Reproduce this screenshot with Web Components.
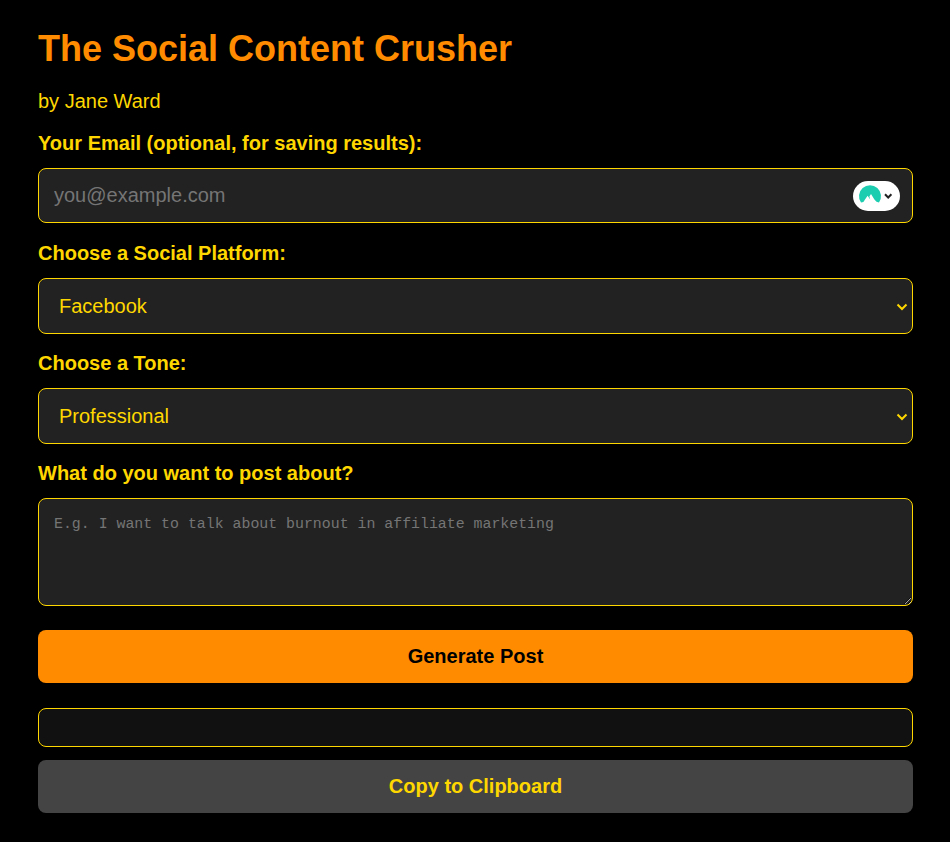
<!DOCTYPE html>
<html lang="en">
<head>
<meta charset="utf-8">
<title>The Social Content Crusher</title>
<style>
  html, body { margin: 0; background: #000; }
  body { font-family: "Liberation Sans", Arial, sans-serif; color: #ffd700; }
</style>
</head>
<body>
<crusher-app>
  <h-title slot="head">The Social Content Crusher</h-title>
  <by-line slot="head">by Jane Ward</by-line>
  <field-label>Your Email (optional, for saving results):</field-label>
  <email-field placeholder="you@example.com"></email-field>
  <field-label>Choose a Social Platform:</field-label>
  <choice-field options="Facebook,LinkedIn,Instagram,X (Twitter)"></choice-field>
  <field-label>Choose a Tone:</field-label>
  <choice-field options="Professional,Casual,Funny,Inspirational"></choice-field>
  <field-label>What do you want to post about?</field-label>
  <topic-field placeholder="E.g. I want to talk about burnout in affiliate marketing"></topic-field>
  <action-button kind="primary">Generate Post</action-button>
  <output-box></output-box>
  <action-button kind="secondary">Copy to Clipboard</action-button>
</crusher-app>

<script>
const define = (name, css, html, setup) => {
  if (window.customElements.get(name)) return
  window.customElements.define(name, class extends HTMLElement {
    constructor () {
      super()
      this.attachShadow({ mode: 'open' }).innerHTML = `<style>${css}</style>${html}`
    }
    connectedCallback () {
      if (setup) setup(this, this.shadowRoot)
    }
  })
}

define('crusher-app', `
  :host { display: block; box-sizing: border-box; width: 950px; height: 842px; padding: 29px 37px 0 38px; background: #000; }
  .main { display: flex; flex-direction: column; margin-top: 19px; }
`, `<slot name="head"></slot><div class="main"><slot></slot></div>`)

define('h-title', `
  :host { display: block; font: bold 36px/40px "Liberation Sans", Arial, sans-serif; color: #ff8c00; }
`, `<slot></slot>`)

define('by-line', `
  :host { display: block; font: 20px/23px "Liberation Sans", Arial, sans-serif; color: #ffd700; margin-top: 21px; }
`, `<slot></slot>`)

define('field-label', `
  :host { display: block; font: bold 20px/23px "Liberation Sans", Arial, sans-serif; color: #ffd700; margin-bottom: 13px; }
`, `<slot></slot>`)

const controlCss = `
  * { box-sizing: border-box; }
  input, select, textarea {
    display: block; width: 100%; margin: 0; background: #222; color: #ffd700;
    border: 1px solid #ffd700; border-radius: 8px; outline: none;
    font: 20px "Liberation Sans", Arial, sans-serif;
  }
  ::placeholder { color: #757575; opacity: 1; }
`

define('email-field', controlCss + `
  :host { display: block; position: relative; margin-bottom: 19px; }
  input { height: 55px; padding: 0 15px; }
  .badge { position: absolute; top: 13px; right: 13px; width: 47px; height: 30px; border-radius: 15px; background: #fff; }
  svg { display: block; }
`, `<input type="email">
  <div class="badge">
    <svg width="47" height="30" viewBox="0 0 47 30">
      <path d="M8 21.5A11 11 0 1 1 26 21.5L23.5 20.8 21.4 18.4 18 13 16.4 15.6 17.2 18.5 14.6 14.8 12 18.6 10.4 21z" fill="#1dcdb0"/>
      <path d="M32 13.3l3.2 3.2 3.2-3.2" fill="none" stroke="#222" stroke-width="2"/>
    </svg>
  </div>`, (el, root) => {
  root.querySelector('input').placeholder = el.getAttribute('placeholder')
})

define('choice-field', controlCss + `
  :host { display: block; position: relative; margin-bottom: 18px; }
  select { height: 56px; padding: 0 36px 0 20px; appearance: none; -webkit-appearance: none; }
  svg { position: absolute; top: 25px; right: 5px; pointer-events: none; }
`, `<select></select>
  <svg width="12" height="8" viewBox="0 0 12 8"><path d="M1.5 1.5l4.5 4.5 4.5-4.5" fill="none" stroke="#ffd700" stroke-width="2"/></svg>`, (el, root) => {
  const select = root.querySelector('select')
  el.getAttribute('options').split(',').forEach(text => {
    const option = document.createElement('option')
    option.textContent = text
    select.appendChild(option)
  })
})

define('topic-field', controlCss + `
  :host { display: block; margin-bottom: 24px; }
  textarea { height: 108px; padding: 17px 15px 15px; font: 14.88px/1.15 "Liberation Mono", "DejaVu Sans Mono", monospace; resize: vertical; }
`, `<textarea></textarea>`, (el, root) => {
  root.querySelector('textarea').placeholder = el.getAttribute('placeholder')
})

define('action-button', `
  :host { display: block; }
  button {
    display: block; width: 100%; height: 53px; border: 0; border-radius: 8px; margin: 0;
    font: bold 20px "Liberation Sans", Arial, sans-serif; cursor: pointer;
  }
  :host([kind="primary"]) button { background: #ff8c00; color: #000; }
  :host([kind="secondary"]) button { background: #444; color: #ffd700; }
`, `<button><slot></slot></button>`)

define('output-box', `
  :host { display: block; box-sizing: border-box; height: 39px; margin: 25px 0 13px; background: #111; border: 1px solid #ffd700; border-radius: 8px; }
`, `<slot></slot>`)
</script>
</body>
</html>
